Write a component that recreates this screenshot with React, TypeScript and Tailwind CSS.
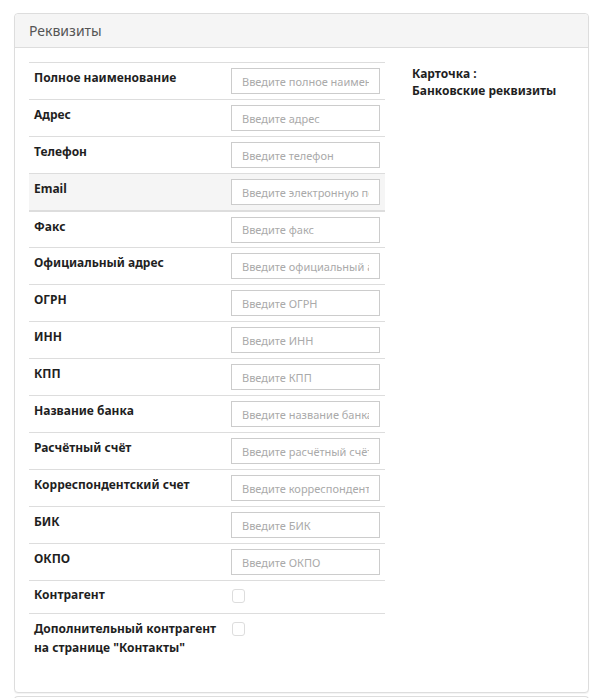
import React from "react";

const fields = [
  { label: "Полное наименование", placeholder: "Введите полное наименование" },
  { label: "Адрес", placeholder: "Введите адрес" },
  { label: "Телефон", placeholder: "Введите телефон" },
  { label: "Email", placeholder: "Введите электронную почту", active: true },
  { label: "Факс", placeholder: "Введите факс" },
  { label: "Официальный адрес", placeholder: "Введите официальный адрес" },
  { label: "ОГРН", placeholder: "Введите ОГРН" },
  { label: "ИНН", placeholder: "Введите ИНН" },
  { label: "КПП", placeholder: "Введите КПП" },
  { label: "Название банка", placeholder: "Введите название банка" },
  { label: "Расчётный счёт", placeholder: "Введите расчётный счёт" },
  { label: "Корреспондентский счет", placeholder: "Введите корреспондентский счет" },
  { label: "БИК", placeholder: "Введите БИК" },
  { label: "ОКПО", placeholder: "Введите ОКПО" },
];

export default function App() {
  return (
    <div className="min-h-[698px] bg-white pt-[13px] px-[14px] font-['Noto_Sans',sans-serif] text-[12px] text-[#333]">
      {/* Panel */}
      <div className="w-[575px] rounded-[4px] border border-[#dddddd] bg-white shadow-[0_1px_1px_rgba(0,0,0,0.05)]">
        <div className="h-[34px] border-b border-[#dddddd] bg-[#f5f5f5] rounded-t-[4px] px-[14px] flex items-center text-[14px] text-[#555]">
          Реквизиты
        </div>

        <div className="flex pl-[14px] pt-[14px] pb-[35px]">
          {/* Fields table */}
          <table className="w-[356px] border-collapse table-fixed">
            <tbody>
              {fields.map((f) => (
                <tr
                  key={f.label}
                  className={
                    f.active
                      ? "bg-[#f5f5f5] border-t border-[#dddddd] border-b-2 border-b-[#dddddd]"
                      : "border-t border-[#dddddd]"
                  }
                >
                  <td className="w-[202px] h-[37px] pl-[5px] pt-[6px] align-top font-bold text-[#1f1f1f]">
                    {f.label}
                  </td>
                  <td className="align-top pt-[5px]">
                    <input
                      className="w-[149px] h-[26px] border border-[#cccccc] bg-white px-[10px] text-[11px] text-[#555] placeholder:text-[#aaa] outline-none"
                      placeholder={f.placeholder}
                    />
                  </td>
                </tr>
              ))}
              <tr className="border-t border-[#dddddd]">
                <td className="h-[33px] pl-[5px] pt-[5px] align-top font-bold text-[#1f1f1f]">Контрагент</td>
                <td className="align-top pt-[8px] pl-[1px]">
                  <span className="block w-[13px] h-[14px] rounded-[3px] border border-[#dddddd] bg-white" />
                </td>
              </tr>
              <tr className="border-t border-[#dddddd]">
                <td className="pl-[5px] pt-[5px] align-top font-bold text-[#1f1f1f] leading-[19px]">
                  Дополнительный контрагент
                  <br />
                  на странице "Контакты"
                </td>
                <td className="align-top pt-[8px] pl-[1px]">
                  <span className="block w-[13px] h-[14px] rounded-[3px] border border-[#dddddd] bg-white" />
                </td>
              </tr>
            </tbody>
          </table>

          {/* Side info */}
          <div className="pl-[27px] pt-[3px] font-bold text-[#1f1f1f] leading-[17px]">
            <div>Карточка :</div>
            <div>Банковские реквизиты</div>
          </div>
        </div>
      </div>
      <div className="mt-[3px] h-[10px] w-[575px] rounded-t-[4px] border border-b-0 border-[#dddddd]" />
    </div>
  );
}
